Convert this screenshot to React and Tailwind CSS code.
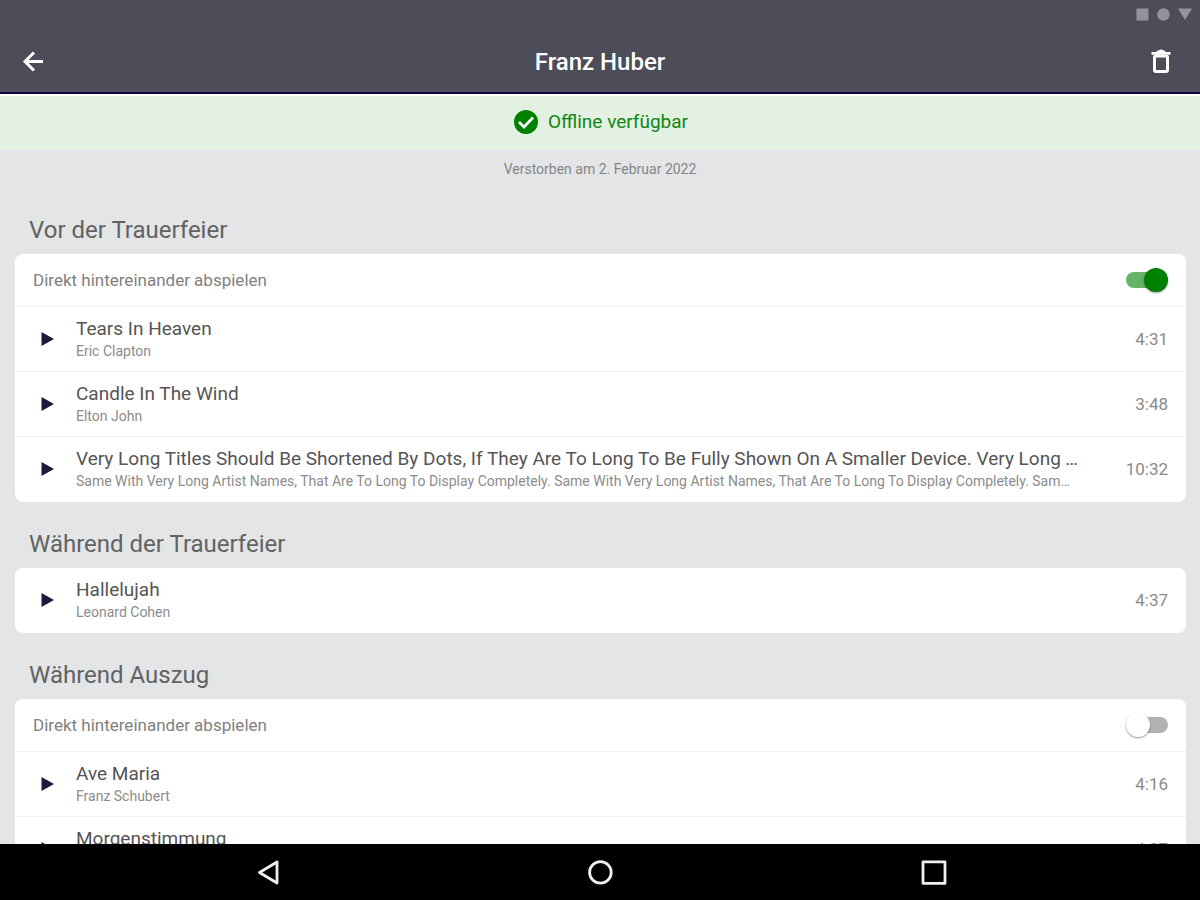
import React, { useState } from "react";

const LONG_TITLE =
    "Very Long Titles Should Be Shortened By Dots, If They Are To Long To Be Fully Shown On A Smaller Device. Very Long Titles Should Be Shortened By Dots.";
const LONG_ARTIST =
    "Same With Very Long Artist Names, That Are To Long To Display Completely. Same With Very Long Artist Names, That Are To Long To Display Completely. Same With Very Long Artist Names.";

const SECTIONS = [
    {
        id: "vor",
        title: "Vor der Trauerfeier",
        hasAutoplay: true,
        autoplay: true,
        songs: [
            { title: "Tears In Heaven", artist: "Eric Clapton", duration: "4:31" },
            { title: "Candle In The Wind", artist: "Elton John", duration: "3:48" },
            { title: LONG_TITLE, artist: LONG_ARTIST, duration: "10:32" },
        ],
    },
    {
        id: "waehrend",
        title: "Während der Trauerfeier",
        hasAutoplay: false,
        songs: [{ title: "Hallelujah", artist: "Leonard Cohen", duration: "4:37" }],
    },
    {
        id: "auszug",
        title: "Während Auszug",
        hasAutoplay: true,
        autoplay: false,
        songs: [
            { title: "Ave Maria", artist: "Franz Schubert", duration: "4:16" },
            { title: "Morgenstimmung", artist: "Edvard Grieg", duration: "4:07" },
        ],
    },
];

function StatusBar() {
    return (
        <div className="flex h-8 items-center justify-end gap-2 pr-2 pb-1 text-[#94939d]">
            <svg viewBox="0 0 13 13" className="size-[13px]" fill="currentColor"><path d="M0.5 0.5h12v12h-12z" /></svg>
            <svg viewBox="0 0 13 13" className="size-[13px]" fill="currentColor"><circle cx="6.5" cy="6.5" r="6.2" /></svg>
            <svg viewBox="0 0 14 13" className="h-[13px] w-[14px]" fill="currentColor"><path d="M0 0.5h14L7 12z" /></svg>
        </div>
    );
}

function Header() {
    return (
        <header className="shrink-0 border-b-2 border-[#06063a] bg-[#4d4c59] text-white">
            <StatusBar />
            <div className="grid h-[60px] grid-cols-[1fr_auto_1fr] items-center">
                <button type="button" aria-label="Zurück" className="ml-[18px] justify-self-start">
                    <svg viewBox="0 0 30 30" className="size-[30px]" fill="none" stroke="currentColor" strokeWidth="3">
                        <path d="M25 14.500H8" />
                        <path d="M16 5.500l-9 9 9 9" />
                    </svg>
                </button>
                <h1 className="text-2xl font-medium">Franz Huber</h1>
                <button type="button" aria-label="Löschen" className="mr-6 justify-self-end">
                    <svg viewBox="0 0 30 30" className="size-[30px]">
                        <path d="M5.500 5h4.500q2-2.600 5-2.600T20 5h4.500v2.800h-19z" fill="currentColor" />
                        <rect x="8.500" y="9" width="13" height="15.500" rx="1.500" fill="none" stroke="currentColor" strokeWidth="3" />
                    </svg>
                </button>
            </div>
        </header>
    );
}

// Checkbox styled as the Android material switch
function Switch({ id, checked, onChange }) {
    return (
        <input
            id={id}
            type="checkbox"
            checked={checked}
            onChange={onChange}
            className="relative h-4 w-[42px] shrink-0 cursor-pointer appearance-none rounded-full bg-[#b1b1b1] before:absolute before:-top-1 before:left-0 before:size-6 before:rounded-full before:bg-white before:shadow-[0_1px_2px_rgba(0,0,0,0.4)] checked:bg-[#66b266] checked:before:left-[18px] checked:before:bg-[#008000]"
        />
    );
}

function SongRow({ song }) {
    return (
        <li className="flex items-center border-b border-[#f0f0f1] py-[10px] pr-[18px] pl-[26px] last:border-transparent">
            <button type="button" aria-label={"Abspielen: " + song.title} className="mr-[22px] shrink-0">
                <svg viewBox="0 0 13 14" className="h-[14px] w-[13px]" fill="#1a1a3a"><path d="M0.500 0l12.500 7-12.500 7z" /></svg>
            </button>
            <div className="min-w-0 flex-1">
                <p className="truncate pr-5 text-[19px] leading-6 text-[#555555]">{song.title}</p>
                <p className="truncate pr-8 text-sm leading-5 text-[#8c8c8c]">{song.artist}</p>
            </div>
            <span className="ml-5 shrink-0 text-[17px] leading-6 text-[#8a8a8a]">{song.duration}</span>
        </li>
    );
}

function Section({ section }) {
    const [autoplay, setAutoplay] = useState(section.autoplay);
    const switchId = "autoplay-" + section.id;

    return (
        <section>
            <h2 className="px-[14px] pt-7 pb-[10px] text-2xl leading-7 text-[#626262]">{section.title}</h2>
            <div className="overflow-hidden rounded-lg bg-white">
                {section.hasAutoplay && (
                    <div className="flex h-[53px] items-center justify-between border-b border-[#f0f0f1] px-[18px]">
                        <label htmlFor={switchId} className="text-[17px] leading-6 text-[#808080]">
                            Direkt hintereinander abspielen
                        </label>
                        <Switch id={switchId} checked={autoplay} onChange={(e) => setAutoplay(e.target.checked)} />
                    </div>
                )}
                <ul>
                    {section.songs.map((song) => (
                        <SongRow key={song.title} song={song} />
                    ))}
                </ul>
            </div>
        </section>
    );
}

function NavigationBar() {
    return (
        <nav className="grid h-14 shrink-0 grid-cols-3 items-center justify-items-center bg-black px-[100px] text-[#f0f0f0]">
            <button type="button" aria-label="Zurück">
                <svg viewBox="0 0 28 28" className="size-7" fill="none" stroke="currentColor" strokeWidth="2.8" strokeLinejoin="round">
                    <path d="M24 4v21L6.500 14.500z" />
                </svg>
            </button>
            <button type="button" aria-label="Startseite">
                <svg viewBox="0 0 28 28" className="size-7" fill="none" stroke="currentColor" strokeWidth="2.8">
                    <circle cx="14.400" cy="14.400" r="10.800" />
                </svg>
            </button>
            <button type="button" aria-label="Übersicht">
                <svg viewBox="0 0 28 28" className="size-7" fill="none" stroke="currentColor" strokeWidth="2.8" strokeLinejoin="round">
                    <rect x="4" y="3.800" width="22" height="21.500" />
                </svg>
            </button>
        </nav>
    );
}

export default function App() {
    return (
        <div className="flex h-screen flex-col bg-[#e3e5e7] font-['Roboto',sans-serif]">
            <Header />
            <main className="min-h-0 flex-1 overflow-y-auto [scrollbar-width:none]">
                <div className="flex h-14 items-center justify-center gap-2 border-t-2 border-white bg-[#e3f1e2] pb-0.5 text-[#118511]">
                    <svg viewBox="0 0 28 28" className="size-7">
                        <circle cx="14" cy="14" r="12" fill="#008000" />
                        <path d="M7 14l5 5 9-9.500" fill="none" stroke="#ffffff" strokeWidth="2.800" />
                    </svg>
                    <span className="text-[19px] leading-6">Offline verfügbar</span>
                </div>
                <p className="py-[9px] text-center text-sm leading-5 text-[#858585]">Verstorben am 2. Februar 2022</p>
                <div className="pr-[14px] pb-7 pl-[15px]">
                    {SECTIONS.map((section) => (
                        <Section key={section.id} section={section} />
                    ))}
                </div>
            </main>
            <NavigationBar />
        </div>
    );
}
